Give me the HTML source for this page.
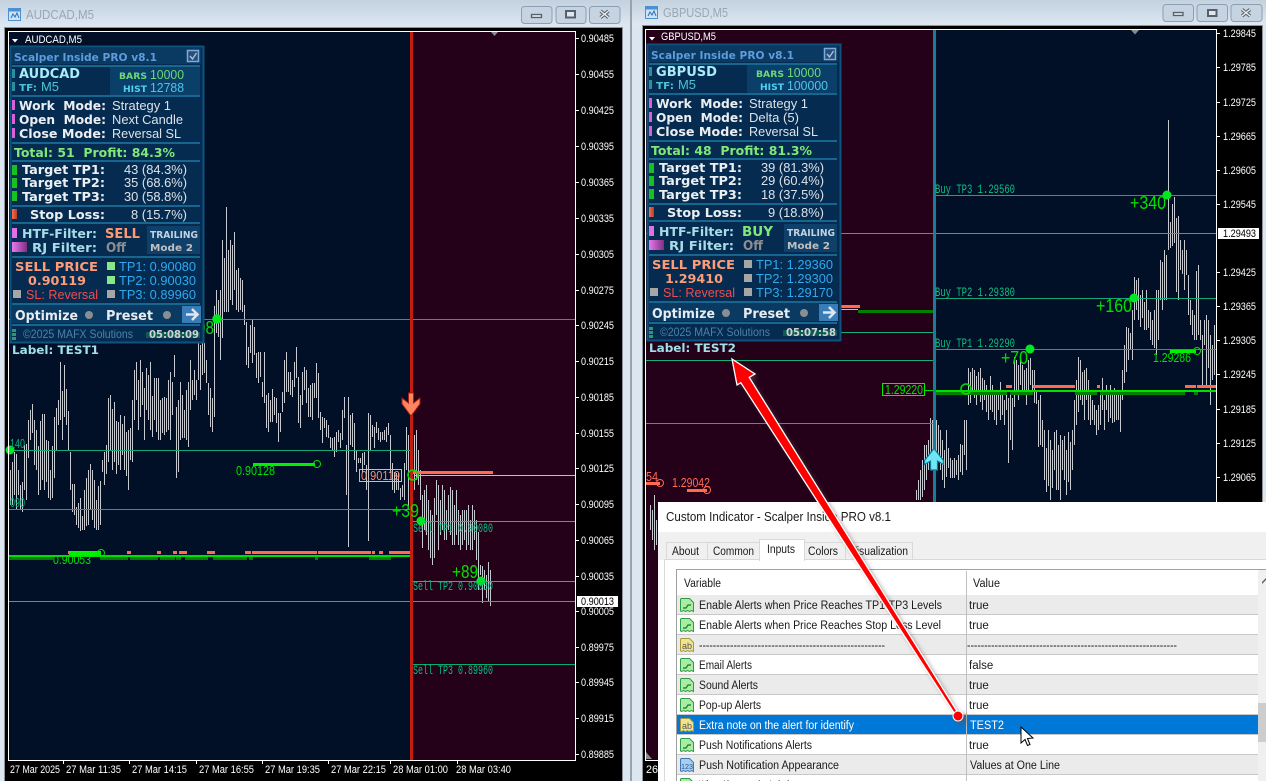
<!DOCTYPE html>
<html><head><meta charset="utf-8"><title>Scalper Inside PRO</title>
<style>
html,body{margin:0;padding:0;background:#dbe6f1;width:1266px;height:781px;overflow:hidden}
svg{display:block}
text{white-space:pre}
.b{font-family:"DejaVu Sans",sans-serif;font-weight:bold}
.n{font-family:"Liberation Sans",sans-serif}
.m{font-family:"Liberation Mono",monospace;font-size:13px;fill:#0cbc84}
.ax{font-family:"Liberation Sans",sans-serif;font-size:11px;fill:#fff}
.big{font-family:"Liberation Sans",sans-serif;font-size:18px;fill:#00e000}
.gl{font-family:"Liberation Sans",sans-serif;font-size:12.5px;fill:#00e000}
.d{font-family:"Liberation Sans",sans-serif;font-size:11.5px;fill:#1a1a1a}
</style></head><body>
<svg width="1266" height="781" viewBox="0 0 1266 781" xmlns="http://www.w3.org/2000/svg">
<defs>
<linearGradient id="tb" x1="0" y1="0" x2="0" y2="1"><stop offset="0" stop-color="#c3d1de"/><stop offset="1" stop-color="#dde8f3"/></linearGradient>
<linearGradient id="mg" x1="0" y1="0" x2="1" y2="0"><stop offset="0" stop-color="#e878f0"/><stop offset="1" stop-color="#803080"/></linearGradient>
<linearGradient id="rd" x1="0" y1="0" x2="1" y2="0"><stop offset="0" stop-color="#ff6a48"/><stop offset="1" stop-color="#b04030"/></linearGradient>
<filter id="sh" x="-10%" y="-10%" width="120%" height="120%"><feGaussianBlur stdDeviation="2.5"/></filter>
<g id="ig"><path d="M1.5 2.5a1 1 0 0 1 1-1h8l4 4v9l-2-1-2 1-2-1-2 1-2-1-2 1-1-.5z" fill="#a9eca2" stroke="#2c9a46"/><path d="M4 11l3 0 2-3 3 0" fill="none" stroke="#127a2a" stroke-width="1.2"/></g>
<g id="iy"><path d="M1.5 2.5a1 1 0 0 1 1-1h8l4 4v9l-2-1-2 1-2-1-2 1-2-1-2 1-1-.5z" fill="#f0e490" stroke="#a89a3a"/></g>
<g id="ib"><path d="M1.5 2.5a1 1 0 0 1 1-1h8l4 4v9l-2-1-2 1-2-1-2 1-2-1-2 1-1-.5z" fill="#a9cdf0" stroke="#3f78b8"/></g>
<g id="wi"><rect x="0.5" y="0.5" width="12" height="12" fill="#cfe2f4" stroke="#4d90d0"/><rect x="0.5" y="0.5" width="12" height="3" fill="#4d90d0"/><path d="M3 10l2-4 2 3 2-4 2 5" fill="none" stroke="#2a70b8"/></g>
</defs>

<!-- chrome -->
<rect width="1266" height="781" fill="#dbe6f1"/>
<rect x="0" y="0" width="630" height="27" fill="url(#tb)"/>
<rect x="632" y="0" width="634" height="25" fill="url(#tb)"/>
<rect x="630" y="0" width="2" height="781" fill="#9aa3ad"/>
<rect x="4" y="27" width="619" height="754" fill="#8e949a"/>
<rect x="642" y="25" width="621" height="756" fill="#8e949a"/>
<rect x="5" y="28" width="617" height="753" fill="#000"/>
<rect x="643" y="26" width="619" height="755" fill="#000"/>

<!-- titlebars -->
<use href="#wi" x="8" y="8"/><use href="#wi" x="645" y="6"/>
<text class="n" x="26" y="19" font-size="12.5" fill="#9aa6b2" textLength="68" lengthAdjust="spacingAndGlyphs">AUDCAD,M5</text>
<text class="n" x="663" y="17" font-size="12.5" fill="#9aa6b2" textLength="65" lengthAdjust="spacingAndGlyphs">GBPUSD,M5</text>
<g fill="#c6d3e0" stroke="#8d9eb3">
<rect x="521.5" y="6.5" width="30.500" height="17" rx="3"/><rect x="556" y="6.5" width="30" height="17" rx="3"/><rect x="589.5" y="6.5" width="30.500" height="17" rx="3"/>
<rect x="1163" y="4.5" width="30.500" height="17" rx="3"/><rect x="1197" y="4.5" width="30.500" height="17" rx="3"/><rect x="1231" y="4.5" width="31" height="17" rx="3"/>
</g>
<g fill="#dfe6ee" stroke="#55606c" stroke-width="1.300">
<rect x="531.5" y="14.5" width="10" height="3"/><rect x="1173.5" y="12.5" width="9.500" height="3"/>
</g>
<g fill="#dfe6ee" stroke="#55606c" stroke-width="2">
<rect x="566" y="11" width="9" height="6.500"/><rect x="1208" y="10" width="8.500" height="6"/>
</g>
<path d="M600.500 11l8 6.500M608.500 11l-8 6.500M1242 9.500l8 6.500M1250 9.500l-8 6.500" stroke="#5a6570" stroke-width="3.400"/>
<path d="M600.500 11l8 6.500M608.500 11l-8 6.500M1242 9.500l8 6.500M1250 9.500l-8 6.500" stroke="#eef2f6" stroke-width="1.300"/>

<!-- LEFT CHART -->
<rect x="9" y="32" width="402" height="728" fill="#011026"/>
<rect x="411" y="32" width="164" height="728" fill="#250019"/>
<path d="M491 32h7l-3.500 4z" fill="#8a8a8a"/>
<path transform="translate(.5,0)" shape-rendering="crispEdges" stroke="#c6cad0" stroke-width="1" fill="none" d="M10 470V505M12 462V505M14 452V495M16 454V510M18 470V495M20 485V510M22 482V512M24 445V490M26 444V500M28 420V458M30 410V440M32 404V433M34 420V465M36 430V470M38 446V495M40 421V490M42 414V480M44 414V490M46 440V482M48 441V498M50 470V500M52 446V498M54 417V478M56 408V450M58 400V425M60 362V420M62 391V440M64 365V417M66 389V425M68 411V450M70 452V490M72 484V512M74 484V515M76 507V525M78 503V528M80 498V531M82 516V530M84 490V530M86 478V526M88 470V525M90 464V510M92 470V520M94 480V528M96 500V530M98 486V530M100 481V525M102 460V472M104 452V485M106 445V474M108 398V462M110 395V450M112 409V470M114 402V462M116 421V474M118 422V465M120 415V470M122 424V455M124 416V470M126 432V476M128 430V490M130 428V460M132 400V462M134 370V420M136 362V400M138 380V430M140 360V417M142 372V405M144 388V440M146 368V410M148 375V420M150 362V430M152 396V437M154 378V420M156 378V432M158 378V440M160 400V440M162 398V433M164 397V435M166 398V432M168 380V430M170 372V440M172 382V415M174 355V377M176 407V478M178 400V472M180 382V440M182 395V438M184 410V438M186 390V440M188 382V447M190 360V410M192 380V400M194 370V395M196 380V400M198 340V380M200 345V390M202 335V375M204 343V373M206 360V383M208 383V415M210 388V427M212 398V432M214 306V417M216 290V333M218 300V337M220 290V360M222 240V338M224 258V312M226 207V312M228 250V312M230 240V300M232 245V305M234 232V290M236 270V310M238 268V312M240 278V310M242 280V312M244 305V325M246 322V365M248 347V368M250 325V353M252 320V363M254 327V355M256 353V378M258 352V383M260 352V377M262 382V397M264 352V403M266 395V428M268 393V432M270 400V422M272 389V422M274 397V415M276 398V423M278 413V442M280 413V432M282 392V412M284 360V403M286 352V392M288 372V392M290 372V395M292 380V397M294 362V387M296 347V378M298 377V423M300 395V428M302 372V405M304 367V390M306 370V403M308 388V417M310 385V417M312 383V420M314 383V398M316 363V398M318 373V418M320 412V430M322 417V443M324 418V428M326 420V437M328 425V438M330 437V448M332 438V450M334 437V457M336 432V452M338 430V442M340 433V448M342 410V440M344 397V418M346 445V495M348 397V547M350 415V445M352 413V447M354 423V460M356 450V472M358 458V463M360 458V463M362 453V473M364 452V465M366 465V490M368 413V541M370 415V450M372 425V437M374 427V448M376 422V433M378 428V440M380 432V442M382 432V440M384 430V440M386 427V442M388 423V435M390 435V473M392 463V490M394 472V493M396 473V490M398 473V490M400 488V500M402 485V497M404 463V500M406 427V470M408 435V510M410 465V505M412 427V500M414 435V490M416 430V480M418 450V485M420 470V500M422 495V548M424 490V530M426 485V535M428 500V550M430 510V558M432 515V565M434 498V558M436 480V515M438 485V550M440 500V535M442 485V530M444 490V540M446 510V540M448 495V530M450 487V535M452 490V545M454 505V545M456 490V535M458 510V545M460 515V550M462 510V545M464 510V540M466 510V550M468 505V545M470 520V550M472 505V550M474 510V540M476 520V560M478 532V590M480 565V575M482 566V603M484 570V590M486 575V598M488 562V602M490 570V606"/>
<g shape-rendering="crispEdges">
<rect x="9" y="319" width="566" height="1" fill="#14a878"/>
<rect x="9" y="450" width="402" height="1" fill="#14a878"/>
<rect x="9" y="509" width="402" height="1" fill="#14a878"/>
<rect x="413" y="521" width="162" height="1" fill="#22b488"/>
<rect x="413" y="581" width="162" height="1" fill="#22b488"/>
<rect x="413" y="664" width="162" height="1" fill="#00b070"/>
<rect x="9" y="601" width="566" height="1" fill="#808088"/>
<rect x="415" y="475" width="160" height="1" fill="#ffa894"/>
<rect x="411" y="471" width="82" height="3" fill="#ff6a50"/>
<rect x="9" y="555" width="402" height="2" fill="#00e000"/>
<path fill="#ff6a50" d="M68 551h33v3h-33zM127 551h4v3h-4zM157 551h4v3h-4zM173 551h4v3h-4zM179 551h8v3h-8zM207 551h8v3h-8zM245 551h6v3h-6zM252 551h65v3h-65zM318 551h53v3h-53zM372 551h3v3h-3zM379 551h4v3h-4zM389 551h22v3h-22z"/>
<path fill="#008000" d="M9 557h44v3h-44zM100 557h28v3h-28zM130 557h28v3h-28zM160 557h15v3h-15zM176 557h5v3h-5zM185 557h23v3h-23zM213 557h34v3h-34zM249 557h4v3h-4zM315 557h3v3h-3zM369 557h22v3h-22z"/>
<rect x="69" y="552" width="32" height="4" fill="#00f000"/>
<rect x="253" y="463" width="62" height="3" fill="#00f000"/>
<rect x="410" y="32" width="3" height="728" fill="#c41c0e"/>
</g>
<circle cx="101" cy="553" r="3.500" fill="none" stroke="#00e000"/>
<circle cx="317" cy="464" r="3.500" fill="none" stroke="#00e000"/>
<circle cx="413" cy="475" r="5" fill="none" stroke="#00e000" stroke-width="1.500"/>
<circle cx="10" cy="450" r="4.500" fill="#00e820"/>
<circle cx="217" cy="319" r="4.800" fill="#00e820"/>
<circle cx="421" cy="521" r="4.500" fill="#00e820"/>
<circle cx="481" cy="581" r="4.500" fill="#00e820"/>
<text class="gl" x="10" y="448" textLength="15" lengthAdjust="spacingAndGlyphs" style="fill:#00b47c">140</text>
<text class="gl" x="10" y="507" textLength="15" lengthAdjust="spacingAndGlyphs" style="fill:#00b47c">090</text>
<text class="gl" x="236" y="475" textLength="39" lengthAdjust="spacingAndGlyphs">0.90128</text>
<text class="gl" x="53" y="564" textLength="38" lengthAdjust="spacingAndGlyphs">0.90053</text>
<rect x="359.500" y="469.500" width="42" height="12" fill="none" stroke="#ffa894"/>
<text class="gl" x="361" y="480" textLength="39" lengthAdjust="spacingAndGlyphs" style="fill:#ff8a70">0.90119</text>
<text class="big" x="392" y="517" textLength="27" lengthAdjust="spacingAndGlyphs">+39</text>
<text class="big" x="452" y="578" textLength="26" lengthAdjust="spacingAndGlyphs">+89</text>
<text class="big" x="197" y="334" textLength="17" lengthAdjust="spacingAndGlyphs">08</text>
<text class="m" x="413" y="532" textLength="80" lengthAdjust="spacingAndGlyphs">Sell TP1 0.90080</text>
<text class="m" x="413" y="590" textLength="80" lengthAdjust="spacingAndGlyphs">Sell TP2 0.90030</text>
<text class="m" x="413" y="674" textLength="80" lengthAdjust="spacingAndGlyphs">Sell TP3 0.89960</text>
<path d="M408.500 393h5v10l6.500-5v6l-9 12-9-12v-6l6.500 5z" fill="#ff8460" stroke="#a81c10"/>
<!-- frame -->
<g shape-rendering="crispEdges" fill="#fff">
<rect x="8" y="31" width="568" height="1"/><rect x="8" y="31" width="1" height="730"/><rect x="575" y="31" width="1" height="730"/><rect x="8" y="760" width="568" height="1"/>
<path d="M576 38h3v1h-3zM576 74h3v1h-3zM576 110h3v1h-3zM576 146h3v1h-3zM576 182h3v1h-3zM576 218h3v1h-3zM576 254h3v1h-3zM576 290h3v1h-3zM576 325h3v1h-3zM576 361h3v1h-3zM576 397h3v1h-3zM576 433h3v1h-3zM576 468h3v1h-3zM576 504h3v1h-3zM576 540h3v1h-3zM576 576h3v1h-3zM576 611h3v1h-3zM576 647h3v1h-3zM576 682h3v1h-3zM576 718h3v1h-3zM576 754h3v1h-3z"/>
<path d="M63 761h1v3h-1zM129 761h1v3h-1zM196 761h1v3h-1zM262 761h1v3h-1zM328 761h1v3h-1zM390 761h1v3h-1zM457 761h1v3h-1z"/>
</g>
<text x="581" y="42" textLength="33" lengthAdjust="spacingAndGlyphs" class="ax">0.90485</text><text x="581" y="78" textLength="33" lengthAdjust="spacingAndGlyphs" class="ax">0.90455</text><text x="581" y="114" textLength="33" lengthAdjust="spacingAndGlyphs" class="ax">0.90425</text><text x="581" y="150" textLength="33" lengthAdjust="spacingAndGlyphs" class="ax">0.90395</text><text x="581" y="186" textLength="33" lengthAdjust="spacingAndGlyphs" class="ax">0.90365</text><text x="581" y="222" textLength="33" lengthAdjust="spacingAndGlyphs" class="ax">0.90335</text><text x="581" y="258" textLength="33" lengthAdjust="spacingAndGlyphs" class="ax">0.90305</text><text x="581" y="294" textLength="33" lengthAdjust="spacingAndGlyphs" class="ax">0.90275</text><text x="581" y="329" textLength="33" lengthAdjust="spacingAndGlyphs" class="ax">0.90245</text><text x="581" y="365" textLength="33" lengthAdjust="spacingAndGlyphs" class="ax">0.90215</text><text x="581" y="401" textLength="33" lengthAdjust="spacingAndGlyphs" class="ax">0.90185</text><text x="581" y="437" textLength="33" lengthAdjust="spacingAndGlyphs" class="ax">0.90155</text><text x="581" y="472" textLength="33" lengthAdjust="spacingAndGlyphs" class="ax">0.90125</text><text x="581" y="508" textLength="33" lengthAdjust="spacingAndGlyphs" class="ax">0.90095</text><text x="581" y="544" textLength="33" lengthAdjust="spacingAndGlyphs" class="ax">0.90065</text><text x="581" y="580" textLength="33" lengthAdjust="spacingAndGlyphs" class="ax">0.90035</text><text x="581" y="615" textLength="33" lengthAdjust="spacingAndGlyphs" class="ax">0.90005</text><text x="581" y="651" textLength="33" lengthAdjust="spacingAndGlyphs" class="ax">0.89975</text><text x="581" y="686" textLength="33" lengthAdjust="spacingAndGlyphs" class="ax">0.89945</text><text x="581" y="722" textLength="33" lengthAdjust="spacingAndGlyphs" class="ax">0.89915</text><text x="581" y="758" textLength="33" lengthAdjust="spacingAndGlyphs" class="ax">0.89885</text>
<rect x="577" y="596" width="41" height="11" fill="#fff"/>
<text x="581" y="605" font-family="Liberation Sans" font-size="11" fill="#000" textLength="33" lengthAdjust="spacingAndGlyphs">0.90013</text>
<text class="ax" x="10" y="773" textLength="50" lengthAdjust="spacingAndGlyphs">27 Mar 2025</text>
<text class="ax" x="66" y="773" textLength="55" lengthAdjust="spacingAndGlyphs">27 Mar 11:35</text>
<text class="ax" x="132" y="773" textLength="55" lengthAdjust="spacingAndGlyphs">27 Mar 14:15</text>
<text class="ax" x="199" y="773" textLength="55" lengthAdjust="spacingAndGlyphs">27 Mar 16:55</text>
<text class="ax" x="265" y="773" textLength="55" lengthAdjust="spacingAndGlyphs">27 Mar 19:35</text>
<text class="ax" x="331" y="773" textLength="55" lengthAdjust="spacingAndGlyphs">27 Mar 22:15</text>
<text class="ax" x="393" y="773" textLength="55" lengthAdjust="spacingAndGlyphs">28 Mar 01:00</text>
<text class="ax" x="456" y="773" textLength="55" lengthAdjust="spacingAndGlyphs">28 Mar 03:40</text>
<path d="M12 39h6l-3 3.500z" fill="#fff"/>
<text class="ax" x="25" y="43" textLength="57" lengthAdjust="spacingAndGlyphs">AUDCAD,M5</text>

<!-- RIGHT CHART -->
<rect x="646" y="30" width="288" height="730" fill="#250019"/>
<rect x="934" y="30" width="282" height="730" fill="#011026"/>
<path d="M1131 30h8l-4 4.500z" fill="#8a8a8a"/>
<path transform="translate(.5,0)" shape-rendering="crispEdges" stroke="#c6cad0" stroke-width="1" fill="none" d="M650 505V530M652 510V540M654 495V550M656 520V545M916 490V500M918 480V500M920 470V500M922 460V497M924 445V490M926 445V480M928 440V470M930 418V468M932 420V460M934 430V465M936 420V470M938 425V455M940 430V470M942 440V480M944 450V488M946 430V477M948 448V468M950 458V478M952 460V478M954 458V478M956 460V475M958 455V480M960 444V472M962 445V475M964 420V455M966 420V470M968 368V405M970 372V403M972 368V395M974 370V398M976 376V405M978 372V395M980 368V402M982 378V410M984 380V400M986 385V412M988 390V420M990 376V410M992 385V412M994 390V420M996 395V425M998 392V410M1000 382V420M1002 392V415M1004 400V425M1006 390V410M1008 398V463M1010 395V440M1012 398V450M1014 357V407M1016 360V395M1018 365V400M1020 360V385M1022 365V395M1024 370V390M1026 368V405M1028 360V390M1030 358V385M1032 370V395M1034 370V403M1036 390V404M1038 400V447M1040 395V445M1042 420V447M1044 430V480M1046 448V492M1048 430V486M1050 440V500M1052 450V488M1054 432V470M1056 430V490M1058 445V490M1060 435V500M1062 440V470M1064 436V480M1066 450V495M1068 432V482M1070 442V490M1072 430V470M1074 400V445M1076 380V425M1078 357V412M1080 360V400M1082 372V405M1084 370V420M1086 368V400M1088 380V420M1090 390V425M1092 400V420M1094 405V425M1096 410V435M1098 405V430M1100 392V425M1102 378V410M1104 400V430M1106 385V410M1108 395V422M1110 385V418M1112 395V423M1114 388V422M1116 390V420M1118 390V420M1120 395V432M1122 370V400M1124 345V383M1126 327V372M1128 328V360M1130 333V350M1132 310V360M1134 277V320M1136 280V310M1138 278V320M1140 295V327M1142 290V318M1144 302V330M1146 290V330M1148 310V328M1150 312V340M1152 320V345M1154 310V348M1156 290V355M1158 290V340M1160 260V300M1162 262V310M1164 250V300M1166 255V300M1168 120V250M1170 222V248M1172 204V246M1174 197V243M1176 218V292M1178 216V300M1180 240V270M1182 250V274M1184 240V290M1186 250V275M1188 275V315M1190 300V325M1192 310V335M1194 315V340M1196 271V340M1198 265V335M1200 320V340M1202 335V385M1204 320V345M1206 315V385M1208 320V368M1210 335V405M1212 345V380M1214 325V375"/>
<g shape-rendering="crispEdges">
<rect x="646" y="360" width="288" height="1" fill="#14b078"/>
<rect x="646" y="423" width="288" height="1" fill="#14b078"/>
<rect x="841" y="332" width="93" height="1" fill="#14b078"/>
<rect x="936" y="195" width="280" height="1" fill="#14a878"/>
<rect x="936" y="298" width="280" height="1" fill="#14a878"/>
<rect x="936" y="349" width="280" height="1" fill="#14a878"/>
<rect x="646" y="233" width="570" height="1" fill="#808088"/>
<rect x="840" y="305" width="20" height="3" fill="#ff6a50"/>
<rect x="840" y="309" width="18" height="1" fill="#ffa894"/>
<rect x="858" y="310" width="76" height="3" fill="#008000"/>
<rect x="936" y="390" width="280" height="2" fill="#00e000"/>
<rect x="924" y="390" width="10" height="1" fill="#00e000"/>
<rect x="933" y="390" width="3" height="3" fill="#008000"/>
<path fill="#ff6a50" d="M1006 385h6v3h-6zM1033 385h42v3h-42zM1097 385h3v3h-3zM1185 385h11v3h-11zM1197 385h19v3h-19zM646 482h14v3h-14zM687 489h20v3h-20z"/>
<path fill="#008000" d="M936 392h71v3h-71zM1010 392h23v3h-23zM1075 392h22v3h-22zM1100 392h85v3h-85zM1194 392h4v3h-4z"/>
<rect x="1170" y="350" width="26" height="3" fill="#00f000"/>
<rect x="933" y="30" width="3" height="472" fill="#1c7c98"/>
</g>
<circle cx="660" cy="483" r="3.500" fill="none" stroke="#ff6a50"/>
<circle cx="707" cy="490" r="3.500" fill="none" stroke="#ff6a50"/>
<circle cx="966" cy="389" r="5" fill="none" stroke="#00e000" stroke-width="1.500"/>
<circle cx="1197" cy="351" r="3.500" fill="none" stroke="#00e000"/>
<circle cx="1030" cy="349" r="4.500" fill="#00e820"/>
<circle cx="1134" cy="298" r="4.500" fill="#00e820"/>
<circle cx="1167" cy="195" r="4.500" fill="#00e820"/>
<text class="m" x="935" y="193" textLength="80" lengthAdjust="spacingAndGlyphs">Buy TP3 1.29560</text>
<text class="m" x="935" y="296" textLength="80" lengthAdjust="spacingAndGlyphs">Buy TP2 1.29380</text>
<text class="m" x="935" y="347" textLength="80" lengthAdjust="spacingAndGlyphs">Buy TP1 1.29290</text>
<text class="big" x="1130" y="209" textLength="36" lengthAdjust="spacingAndGlyphs">+340</text>
<text class="big" x="1096" y="312" textLength="36" lengthAdjust="spacingAndGlyphs">+160</text>
<text class="big" x="1001" y="364" textLength="27" lengthAdjust="spacingAndGlyphs">+70</text>
<text class="gl" x="1153" y="362" textLength="38" lengthAdjust="spacingAndGlyphs">1.29286</text>
<rect x="882.500" y="383.500" width="42" height="12" fill="#250019" stroke="#00f000"/>
<text class="gl" x="885" y="394" textLength="38" lengthAdjust="spacingAndGlyphs">1.29220</text>
<text class="gl" x="646" y="481" textLength="12" lengthAdjust="spacingAndGlyphs" style="fill:#ff6a50">54</text>
<text class="gl" x="672" y="487" textLength="38" lengthAdjust="spacingAndGlyphs" style="fill:#ff6a50">1.29042</text>
<path d="M930.500 470v-9l-6 3.500v-4l9.500-12 9.500 12v4l-6-3.500v9z" fill="#6fe6f4" stroke="#0c7c9c" stroke-width="1.200"/>
<g shape-rendering="crispEdges" fill="#fff">
<rect x="645" y="29" width="572" height="1"/><rect x="645" y="29" width="1" height="732"/><rect x="1216" y="29" width="1" height="732"/><rect x="645" y="760" width="20" height="1"/>
<path d="M1217 33h3v1h-3zM1217 67h3v1h-3zM1217 102h3v1h-3zM1217 136h3v1h-3zM1217 170h3v1h-3zM1217 204h3v1h-3zM1217 272h3v1h-3zM1217 306h3v1h-3zM1217 340h3v1h-3zM1217 374h3v1h-3zM1217 409h3v1h-3zM1217 443h3v1h-3zM1217 477h3v1h-3z"/>
</g>
<text class="ax" x="1223" y="37" textLength="33" lengthAdjust="spacingAndGlyphs">1.29845</text><text class="ax" x="1223" y="71" textLength="33" lengthAdjust="spacingAndGlyphs">1.29785</text><text class="ax" x="1223" y="106" textLength="33" lengthAdjust="spacingAndGlyphs">1.29725</text><text class="ax" x="1223" y="140" textLength="33" lengthAdjust="spacingAndGlyphs">1.29665</text><text class="ax" x="1223" y="174" textLength="33" lengthAdjust="spacingAndGlyphs">1.29605</text><text class="ax" x="1223" y="208" textLength="33" lengthAdjust="spacingAndGlyphs">1.29545</text><text class="ax" x="1223" y="276" textLength="33" lengthAdjust="spacingAndGlyphs">1.29425</text><text class="ax" x="1223" y="310" textLength="33" lengthAdjust="spacingAndGlyphs">1.29365</text><text class="ax" x="1223" y="344" textLength="33" lengthAdjust="spacingAndGlyphs">1.29305</text><text class="ax" x="1223" y="378" textLength="33" lengthAdjust="spacingAndGlyphs">1.29245</text><text class="ax" x="1223" y="413" textLength="33" lengthAdjust="spacingAndGlyphs">1.29185</text><text class="ax" x="1223" y="447" textLength="33" lengthAdjust="spacingAndGlyphs">1.29125</text><text class="ax" x="1223" y="481" textLength="33" lengthAdjust="spacingAndGlyphs">1.29065</text>
<rect x="1218" y="228" width="41" height="11" fill="#fff"/>
<text x="1223" y="237" font-family="Liberation Sans" font-size="11" fill="#000" textLength="33" lengthAdjust="spacingAndGlyphs">1.29493</text>
<path d="M649 37h6l-3 3.500z" fill="#fff"/>
<text class="ax" x="661" y="40" textLength="55" lengthAdjust="spacingAndGlyphs">GBPUSD,M5</text>
<path d="M646 752l6 7h-6z" fill="#8a8a8a"/>
<text class="ax" x="646" y="773" textLength="12" lengthAdjust="spacingAndGlyphs">26</text>

<!-- PANEL 1 -->
<g id="p1">
<rect x="10.500" y="46.500" width="193" height="296" fill="#052c50" stroke="#0f527e" stroke-width="2"/>
<rect x="12" y="48" width="189" height="16" fill="#0a3a62"/>
<rect x="110" y="67" width="90" height="28" fill="#0a3f6a"/>
<rect x="147" y="226" width="53" height="28" fill="#0e406a"/>
<rect x="12" y="305" width="189" height="18" fill="#0a3a62"/>
<g fill="#16668f" shape-rendering="crispEdges">
<rect x="12" y="65" width="188" height="2"/><rect x="12" y="95" width="188" height="2"/><rect x="12" y="142" width="188" height="2"/><rect x="12" y="160" width="188" height="2"/><rect x="12" y="205" width="188" height="2"/><rect x="12" y="222" width="188" height="2"/><rect x="12" y="256" width="188" height="2"/><rect x="12" y="303" width="188" height="2"/><rect x="12" y="324" width="188" height="2"/>
</g>
<text class="b" x="14" y="61" font-size="11" fill="#5e9cdc" textLength="143" lengthAdjust="spacingAndGlyphs">Scalper Inside PRO v8.1</text>
<rect x="187.500" y="50.500" width="11" height="11" fill="#2b4d70" stroke="#7aaae0" stroke-width="1.500"/><path d="M190 56l2.500 3 4-6" fill="none" stroke="#9cc4f0" stroke-width="1.400"/>
<rect x="12" y="69" width="3" height="9" fill="#2a90a0"/><rect x="12" y="82" width="3" height="9" fill="#2a90a0"/>
<text class="b" x="19" y="78" font-size="13" fill="#a8ecf8" textLength="61" lengthAdjust="spacingAndGlyphs">AUDCAD</text>
<text class="b" x="19" y="91" font-size="10" fill="#4cc4d8" textLength="18" lengthAdjust="spacingAndGlyphs">TF:</text>
<text class="n" x="41" y="91" font-size="13" fill="#4cc4d8" textLength="18" lengthAdjust="spacingAndGlyphs">M5</text>
<text class="b" x="119" y="79" font-size="9" fill="#70d878" textLength="28" lengthAdjust="spacingAndGlyphs">BARS</text>
<text class="n" x="150" y="79" font-size="12.5" fill="#70d878" textLength="34" lengthAdjust="spacingAndGlyphs">10000</text>
<text class="b" x="123" y="92" font-size="9" fill="#50d0f0" textLength="24" lengthAdjust="spacingAndGlyphs">HIST</text>
<text class="n" x="150" y="92" font-size="12.5" fill="#50c4e8" textLength="34" lengthAdjust="spacingAndGlyphs">12788</text>
<rect x="12" y="100" width="3" height="10" fill="#d860d8"/><rect x="12" y="114" width="3" height="10" fill="#d860d8"/><rect x="12" y="128" width="3" height="10" fill="#d860d8"/>
<g class="b" font-size="12" fill="#eceff2">
<text x="19" y="110" textLength="87" lengthAdjust="spacingAndGlyphs">Work  Mode:</text>
<text x="19" y="124" textLength="87" lengthAdjust="spacingAndGlyphs">Open  Mode:</text>
<text x="19" y="138" textLength="87" lengthAdjust="spacingAndGlyphs">Close Mode:</text>
</g>
<g class="n" font-size="13" fill="#dde2e8">
<text x="112" y="110" textLength="59" lengthAdjust="spacingAndGlyphs">Strategy 1</text>
<text x="112" y="124" textLength="71" lengthAdjust="spacingAndGlyphs">Next Candle</text>
<text x="112" y="138" textLength="69" lengthAdjust="spacingAndGlyphs">Reversal SL</text>
</g>
<text class="b" x="14" y="157" font-size="12" fill="#80e878" textLength="161" lengthAdjust="spacingAndGlyphs">Total: 51  Profit: 84.3%</text>
<rect x="12" y="165" width="5" height="10" fill="#18c020"/><rect x="12" y="178" width="5" height="10" fill="#18c020"/><rect x="12" y="191" width="5" height="10" fill="#18c020"/>
<rect x="12" y="209" width="5" height="10" fill="url(#rd)"/>
<g class="b" font-size="12" fill="#eceff2">
<text x="22" y="174" textLength="83" lengthAdjust="spacingAndGlyphs">Target TP1:</text>
<text x="22" y="187" textLength="83" lengthAdjust="spacingAndGlyphs">Target TP2:</text>
<text x="22" y="201" textLength="83" lengthAdjust="spacingAndGlyphs">Target TP3:</text>
<text x="30" y="219" textLength="75" lengthAdjust="spacingAndGlyphs">Stop Loss:</text>
</g>
<g class="n" font-size="13" fill="#dde2e8">
<text x="124" y="174" textLength="63" lengthAdjust="spacingAndGlyphs">43 (84.3%)</text>
<text x="124" y="187" textLength="63" lengthAdjust="spacingAndGlyphs">35 (68.6%)</text>
<text x="124" y="201" textLength="63" lengthAdjust="spacingAndGlyphs">30 (58.8%)</text>
<text x="131" y="219" textLength="56" lengthAdjust="spacingAndGlyphs">8 (15.7%)</text>
</g>
<rect x="12" y="228" width="5" height="10" fill="#e070e8"/><rect x="12" y="242" width="15" height="10" fill="url(#mg)"/>
<text class="b" x="22" y="238" font-size="12" fill="#a8dce8" textLength="75" lengthAdjust="spacingAndGlyphs">HTF-Filter:</text>
<text class="b" x="32" y="252" font-size="12" fill="#a8dce8" textLength="65" lengthAdjust="spacingAndGlyphs">RJ Filter:</text>
<text class="b" x="105" y="238" font-size="13" fill="#ff9a70" textLength="35" lengthAdjust="spacingAndGlyphs">SELL</text>
<text class="b" x="106" y="252" font-size="13" fill="#8e8e8e" textLength="20" lengthAdjust="spacingAndGlyphs">Off</text>
<text class="b" x="150" y="238" font-size="9.500" fill="#c4d2e0" textLength="48" lengthAdjust="spacingAndGlyphs">TRAILING</text>
<text class="b" x="150" y="251" font-size="10" fill="#c0c0c0" textLength="43" lengthAdjust="spacingAndGlyphs">Mode 2</text>
<text class="b" x="15" y="271" font-size="12.500" fill="#ff9c78" textLength="83" lengthAdjust="spacingAndGlyphs">SELL PRICE</text>
<text class="b" x="28" y="285" font-size="12.500" fill="#ff9c78" textLength="58" lengthAdjust="spacingAndGlyphs">0.90119</text>
<rect x="13" y="290" width="8" height="8" fill="#a6a6a6"/>
<text class="n" x="26" y="299" font-size="13" fill="#f04c4c" textLength="72" lengthAdjust="spacingAndGlyphs">SL: Reversal</text>
<rect x="107" y="262" width="8" height="8" fill="#88e888"/><rect x="107" y="276" width="8" height="8" fill="#88e888"/><rect x="107" y="290" width="8" height="8" fill="#a6a6a6"/>
<g class="n" font-size="13" fill="#2ea8ee">
<text x="119" y="271" textLength="77" lengthAdjust="spacingAndGlyphs">TP1: 0.90080</text>
<text x="119" y="285" textLength="77" lengthAdjust="spacingAndGlyphs">TP2: 0.90030</text>
<text x="119" y="299" textLength="77" lengthAdjust="spacingAndGlyphs">TP3: 0.89960</text>
</g>
<text class="b" x="15" y="320" font-size="13" fill="#e8ecf0" textLength="63" lengthAdjust="spacingAndGlyphs">Optimize</text>
<circle cx="89" cy="315" r="4" fill="#8a8e92"/>
<text class="b" x="106" y="320" font-size="13" fill="#e8ecf0" textLength="47" lengthAdjust="spacingAndGlyphs">Preset</text>
<circle cx="167" cy="315" r="4" fill="#8a8e92"/>
<rect x="182" y="306" width="19" height="17" fill="#3a7cb8"/>
<path d="M186 314.500h11M192 309l5.500 5.500-5.500 5.500" fill="none" stroke="#dfe6ee" stroke-width="2.500"/>
<path d="M12 329h4v3h-4zM12 333h4v3h-4zM12 337h4v3h-4z" fill="#2a9a6a"/>
<text class="n" x="23" y="338" font-size="12" fill="#4a80aa" textLength="110" lengthAdjust="spacingAndGlyphs">©2025 MAFX Solutions</text>
<rect x="146" y="332" width="54" height="6" fill="#0e5a52"/>
<text class="b" x="149" y="338" font-size="10.500" fill="#cfd2d4" textLength="50" lengthAdjust="spacingAndGlyphs">05:08:09</text>
<text class="b" x="12" y="354" font-size="11.500" fill="#a0e0e8" textLength="87" lengthAdjust="spacingAndGlyphs">Label: TEST1</text>
</g>

<!-- PANEL 2 -->
<g id="p2" transform="translate(637,-2)">
<rect x="10.500" y="46.500" width="193" height="296" fill="#052c50" stroke="#0f527e" stroke-width="2"/>
<rect x="12" y="48" width="189" height="16" fill="#0a3a62"/>
<rect x="110" y="67" width="90" height="28" fill="#0a3f6a"/>
<rect x="147" y="226" width="53" height="28" fill="#0e406a"/>
<rect x="12" y="305" width="189" height="18" fill="#0a3a62"/>
<g fill="#16668f" shape-rendering="crispEdges">
<rect x="12" y="65" width="188" height="2"/><rect x="12" y="95" width="188" height="2"/><rect x="12" y="142" width="188" height="2"/><rect x="12" y="160" width="188" height="2"/><rect x="12" y="205" width="188" height="2"/><rect x="12" y="222" width="188" height="2"/><rect x="12" y="256" width="188" height="2"/><rect x="12" y="303" width="188" height="2"/><rect x="12" y="324" width="188" height="2"/>
</g>
<text class="b" x="14" y="61" font-size="11" fill="#5e9cdc" textLength="143" lengthAdjust="spacingAndGlyphs">Scalper Inside PRO v8.1</text>
<rect x="187.500" y="50.500" width="11" height="11" fill="#2b4d70" stroke="#7aaae0" stroke-width="1.500"/><path d="M190 56l2.500 3 4-6" fill="none" stroke="#9cc4f0" stroke-width="1.400"/>
<rect x="12" y="69" width="3" height="9" fill="#2a90a0"/><rect x="12" y="82" width="3" height="9" fill="#2a90a0"/>
<text class="b" x="19" y="78" font-size="13" fill="#a8ecf8" textLength="61" lengthAdjust="spacingAndGlyphs">GBPUSD</text>
<text class="b" x="19" y="91" font-size="10" fill="#4cc4d8" textLength="18" lengthAdjust="spacingAndGlyphs">TF:</text>
<text class="n" x="41" y="91" font-size="13" fill="#4cc4d8" textLength="18" lengthAdjust="spacingAndGlyphs">M5</text>
<text class="b" x="119" y="79" font-size="9" fill="#70d878" textLength="28" lengthAdjust="spacingAndGlyphs">BARS</text>
<text class="n" x="150" y="79" font-size="12.5" fill="#70d878" textLength="34" lengthAdjust="spacingAndGlyphs">10000</text>
<text class="b" x="123" y="92" font-size="9" fill="#50d0f0" textLength="24" lengthAdjust="spacingAndGlyphs">HIST</text>
<text class="n" x="150" y="92" font-size="12.5" fill="#50c4e8" textLength="41" lengthAdjust="spacingAndGlyphs">100000</text>
<rect x="12" y="100" width="3" height="10" fill="#d860d8"/><rect x="12" y="114" width="3" height="10" fill="#d860d8"/><rect x="12" y="128" width="3" height="10" fill="#d860d8"/>
<g class="b" font-size="12" fill="#eceff2">
<text x="19" y="110" textLength="87" lengthAdjust="spacingAndGlyphs">Work  Mode:</text>
<text x="19" y="124" textLength="87" lengthAdjust="spacingAndGlyphs">Open  Mode:</text>
<text x="19" y="138" textLength="87" lengthAdjust="spacingAndGlyphs">Close Mode:</text>
</g>
<g class="n" font-size="13" fill="#dde2e8">
<text x="112" y="110" textLength="59" lengthAdjust="spacingAndGlyphs">Strategy 1</text>
<text x="112" y="124" textLength="50" lengthAdjust="spacingAndGlyphs">Delta (5)</text>
<text x="112" y="138" textLength="69" lengthAdjust="spacingAndGlyphs">Reversal SL</text>
</g>
<text class="b" x="14" y="157" font-size="12" fill="#80e878" textLength="161" lengthAdjust="spacingAndGlyphs">Total: 48  Profit: 81.3%</text>
<rect x="12" y="165" width="5" height="10" fill="#18c020"/><rect x="12" y="178" width="5" height="10" fill="#18c020"/><rect x="12" y="191" width="5" height="10" fill="#18c020"/>
<rect x="12" y="209" width="5" height="10" fill="url(#rd)"/>
<g class="b" font-size="12" fill="#eceff2">
<text x="22" y="174" textLength="83" lengthAdjust="spacingAndGlyphs">Target TP1:</text>
<text x="22" y="187" textLength="83" lengthAdjust="spacingAndGlyphs">Target TP2:</text>
<text x="22" y="201" textLength="83" lengthAdjust="spacingAndGlyphs">Target TP3:</text>
<text x="30" y="219" textLength="75" lengthAdjust="spacingAndGlyphs">Stop Loss:</text>
</g>
<g class="n" font-size="13" fill="#dde2e8">
<text x="124" y="174" textLength="63" lengthAdjust="spacingAndGlyphs">39 (81.3%)</text>
<text x="124" y="187" textLength="63" lengthAdjust="spacingAndGlyphs">29 (60.4%)</text>
<text x="124" y="201" textLength="63" lengthAdjust="spacingAndGlyphs">18 (37.5%)</text>
<text x="131" y="219" textLength="56" lengthAdjust="spacingAndGlyphs">9 (18.8%)</text>
</g>
<rect x="12" y="228" width="5" height="10" fill="#e070e8"/><rect x="12" y="242" width="15" height="10" fill="url(#mg)"/>
<text class="b" x="22" y="238" font-size="12" fill="#a8dce8" textLength="75" lengthAdjust="spacingAndGlyphs">HTF-Filter:</text>
<text class="b" x="32" y="252" font-size="12" fill="#a8dce8" textLength="65" lengthAdjust="spacingAndGlyphs">RJ Filter:</text>
<text class="b" x="105" y="238" font-size="13" fill="#80e878" textLength="31" lengthAdjust="spacingAndGlyphs">BUY</text>
<text class="b" x="106" y="252" font-size="13" fill="#8e8e8e" textLength="20" lengthAdjust="spacingAndGlyphs">Off</text>
<text class="b" x="150" y="238" font-size="9.500" fill="#c4d2e0" textLength="48" lengthAdjust="spacingAndGlyphs">TRAILING</text>
<text class="b" x="150" y="251" font-size="10" fill="#c0c0c0" textLength="43" lengthAdjust="spacingAndGlyphs">Mode 2</text>
<text class="b" x="15" y="271" font-size="12.500" fill="#ff9c78" textLength="83" lengthAdjust="spacingAndGlyphs">SELL PRICE</text>
<text class="b" x="28" y="285" font-size="12.500" fill="#ff9c78" textLength="58" lengthAdjust="spacingAndGlyphs">1.29410</text>
<rect x="13" y="290" width="8" height="8" fill="#a6a6a6"/>
<text class="n" x="26" y="299" font-size="13" fill="#f04c4c" textLength="72" lengthAdjust="spacingAndGlyphs">SL: Reversal</text>
<rect x="107" y="262" width="8" height="8" fill="#a6a6a6"/><rect x="107" y="276" width="8" height="8" fill="#a6a6a6"/><rect x="107" y="290" width="8" height="8" fill="#a6a6a6"/>
<g class="n" font-size="13" fill="#2ea8ee">
<text x="119" y="271" textLength="77" lengthAdjust="spacingAndGlyphs">TP1: 1.29360</text>
<text x="119" y="285" textLength="77" lengthAdjust="spacingAndGlyphs">TP2: 1.29300</text>
<text x="119" y="299" textLength="77" lengthAdjust="spacingAndGlyphs">TP3: 1.29170</text>
</g>
<text class="b" x="15" y="320" font-size="13" fill="#e8ecf0" textLength="63" lengthAdjust="spacingAndGlyphs">Optimize</text>
<circle cx="89" cy="315" r="4" fill="#8a8e92"/>
<text class="b" x="106" y="320" font-size="13" fill="#e8ecf0" textLength="47" lengthAdjust="spacingAndGlyphs">Preset</text>
<circle cx="167" cy="315" r="4" fill="#8a8e92"/>
<rect x="182" y="306" width="19" height="17" fill="#3a7cb8"/>
<path d="M186 314.500h11M192 309l5.500 5.500-5.500 5.500" fill="none" stroke="#dfe6ee" stroke-width="2.500"/>
<path d="M12 329h4v3h-4zM12 333h4v3h-4zM12 337h4v3h-4z" fill="#2a9a6a"/>
<text class="n" x="23" y="338" font-size="12" fill="#4a80aa" textLength="110" lengthAdjust="spacingAndGlyphs">©2025 MAFX Solutions</text>
<rect x="146" y="332" width="54" height="6" fill="#0e5a52"/>
<text class="b" x="149" y="338" font-size="10.500" fill="#cfd2d4" textLength="50" lengthAdjust="spacingAndGlyphs">05:07:58</text>
<text class="b" x="12" y="354" font-size="11.500" fill="#a0e0e8" textLength="87" lengthAdjust="spacingAndGlyphs">Label: TEST2</text>
</g>

<!-- DIALOG -->
<rect x="658" y="502" width="608" height="279" fill="#fff"/>
<rect x="658" y="532" width="608" height="28" fill="#f0f0f0"/>
<text x="666" y="521" font-family="Liberation Sans" font-size="12.500" fill="#1a1a1a" textLength="225" lengthAdjust="spacingAndGlyphs">Custom Indicator - Scalper Inside PRO v8.1</text>
<rect x="664" y="559" width="602" height="1" fill="#d9d9d9"/><rect x="664" y="559" width="1" height="222" fill="#d9d9d9"/>
<g fill="#f0f0f0" stroke="#d9d9d9" shape-rendering="crispEdges">
<rect x="666.500" y="542.500" width="41" height="17"/><rect x="707.500" y="542.500" width="52" height="17"/><rect x="804.500" y="542.500" width="41" height="17"/><rect x="845.500" y="542.500" width="67" height="17"/>
</g>
<rect x="759.500" y="539.500" width="45" height="21" fill="#fff" stroke="#d9d9d9" shape-rendering="crispEdges"/>
<rect x="760" y="558" width="44" height="3" fill="#fff"/>
<text x="672" y="555" class="d" textLength="27" lengthAdjust="spacingAndGlyphs">About</text>
<text x="713" y="555" class="d" textLength="41" lengthAdjust="spacingAndGlyphs">Common</text>
<text x="767" y="553" class="d" textLength="28" lengthAdjust="spacingAndGlyphs">Inputs</text>
<text x="808" y="555" class="d" textLength="30" lengthAdjust="spacingAndGlyphs">Colors</text>
<text x="850" y="555" class="d" textLength="58" lengthAdjust="spacingAndGlyphs">Visualization</text>
<rect x="676" y="569" width="590" height="1" fill="#a0a0a0"/>
<rect x="676" y="569" width="1" height="212" fill="#a0a0a0"/>
<rect x="1258" y="570" width="8" height="211" fill="#f0f0f0"/>
<rect x="1258" y="703" width="8" height="39" fill="#cdcdcd"/>
<path d="M1262 582l4-4v2l-4 4z" fill="#606060"/>
<g shape-rendering="crispEdges">
<rect x="677" y="595" width="581" height="20" fill="#ebebeb"/>
<rect x="677" y="635" width="581" height="20" fill="#ebebeb"/>
<rect x="677" y="675" width="581" height="20" fill="#ebebeb"/>
<rect x="677" y="715" width="581" height="20" fill="#0078d7"/>
<rect x="677" y="755" width="581" height="20" fill="#ebebeb"/>
<path fill="#c8c8c8" d="M677 614h581v1h-581zM677 634h581v1h-581zM677 654h581v1h-581zM677 674h581v1h-581zM677 694h581v1h-581zM677 714h581v1h-581zM677 734h581v1h-581zM677 754h581v1h-581zM677 774h581v1h-581z"/>
<rect x="966" y="571" width="1" height="210" fill="#c0c0c0"/>
</g>
<use href="#ig" x="679" y="597"/><use href="#ig" x="679" y="617"/><use href="#iy" x="679" y="637"/><use href="#ig" x="679" y="657"/><use href="#ig" x="679" y="677"/><use href="#ig" x="679" y="697"/><use href="#iy" x="679" y="717"/><use href="#ig" x="679" y="737"/><use href="#ib" x="679" y="757"/><use href="#ig" x="679" y="777"/>
<text x="682" y="649" font-family="Liberation Sans" font-size="9" fill="#555" textLength="10" lengthAdjust="spacingAndGlyphs">ab</text>
<text x="682" y="729" font-family="Liberation Sans" font-size="9" fill="#555" textLength="10" lengthAdjust="spacingAndGlyphs">ab</text>
<text x="681" y="769" font-family="Liberation Sans" font-size="7" fill="#245a98" textLength="12" lengthAdjust="spacingAndGlyphs">123</text>
<text class="d" x="684" y="587" textLength="37" lengthAdjust="spacingAndGlyphs">Variable</text>
<text class="d" x="973" y="587" textLength="27" lengthAdjust="spacingAndGlyphs">Value</text>
<text class="d" x="699" y="609" textLength="243" lengthAdjust="spacingAndGlyphs">Enable Alerts when Price Reaches TP1-TP3 Levels</text>
<text class="d" x="699" y="629" textLength="242" lengthAdjust="spacingAndGlyphs">Enable Alerts when Price Reaches Stop Loss Level</text>
<text class="d" x="699" y="649" textLength="186" lengthAdjust="spacingAndGlyphs">------------------------------------------------------</text>
<text class="d" x="699" y="669" textLength="53" lengthAdjust="spacingAndGlyphs">Email Alerts</text>
<text class="d" x="699" y="689" textLength="59" lengthAdjust="spacingAndGlyphs">Sound Alerts</text>
<text class="d" x="699" y="709" textLength="62" lengthAdjust="spacingAndGlyphs">Pop-up Alerts</text>
<text class="d" x="699" y="729" textLength="155" lengthAdjust="spacingAndGlyphs" style="fill:#fff">Extra note on the alert for identify</text>
<text class="d" x="699" y="749" textLength="113" lengthAdjust="spacingAndGlyphs">Push Notifications Alerts</text>
<text class="d" x="699" y="769" textLength="140" lengthAdjust="spacingAndGlyphs">Push Notification Appearance</text>
<text class="d" x="699" y="789" textLength="90" lengthAdjust="spacingAndGlyphs">When Alarm on the Label</text>
<text class="d" x="969" y="609">true</text>
<text class="d" x="969" y="629">true</text>
<text class="d" x="967" y="649" textLength="210" lengthAdjust="spacingAndGlyphs">-------------------------------------------------------------</text>
<text class="d" x="969" y="669">false</text>
<text class="d" x="969" y="689">true</text>
<text class="d" x="969" y="709">true</text>
<text class="d" x="970" y="729" style="fill:#fff" textLength="34" lengthAdjust="spacingAndGlyphs">TEST2</text>
<text class="d" x="969" y="749">true</text>
<text class="d" x="970" y="769" textLength="90" lengthAdjust="spacingAndGlyphs">Values at One Line</text>

<!-- big arrow -->
<g opacity=".55" transform="translate(3,3)" filter="url(#sh)">
<path d="M732 359l23 15-5.800 3.300L959.400 715.100l-2.800 1.800L740.800 382.700 737 385z" fill="#555"/>
<circle cx="958" cy="716" r="6" fill="#555"/>
</g>
<path d="M732 359l23 15-5.800 3.300L959.400 715.100l-2.800 1.800L740.800 382.700 737 385z" fill="#f00" stroke="#fff" stroke-width="1.300"/>
<circle cx="958" cy="716" r="5" fill="#f00" stroke="#fff" stroke-width="1"/>
<path d="M1021 727v16l4-3.500 2.500 6 2.500-1-2.500-6 5.500-.5z" fill="#fff" stroke="#000"/>
</svg>
</body></html>
